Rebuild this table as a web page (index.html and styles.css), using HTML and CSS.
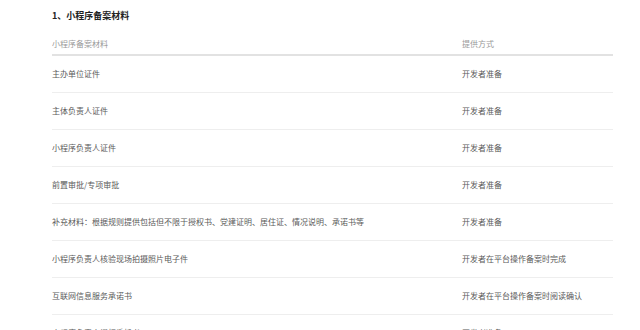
FILE: index.html
```html
<!DOCTYPE html>
<html lang="zh-CN">
<head>
<meta charset="utf-8">
<link rel="stylesheet" href="styles.css">
</head>
<body>
<div class="page">
  <h2 class="title">1、小程序备案材料</h2>
  <div class="table">
    <div class="row head">
      <div class="c1">小程序备案材料</div>
      <div class="c2">提供方式</div>
    </div>
    <div class="row"><div class="c1">主办单位证件</div><div class="c2">开发者准备</div></div>
    <div class="row"><div class="c1">主体负责人证件</div><div class="c2">开发者准备</div></div>
    <div class="row"><div class="c1">小程序负责人证件</div><div class="c2">开发者准备</div></div>
    <div class="row"><div class="c1">前置审批/专项审批</div><div class="c2">开发者准备</div></div>
    <div class="row"><div class="c1">补充材料：根据规则提供包括但不限于授权书、党建证明、居住证、情况说明、承诺书等</div><div class="c2">开发者准备</div></div>
    <div class="row"><div class="c1">小程序负责人核验现场拍摄照片电子件</div><div class="c2">开发者在平台操作备案时完成</div></div>
    <div class="row"><div class="c1">互联网信息服务承诺书</div><div class="c2">开发者在平台操作备案时阅读确认</div></div>
    <div class="row"><div class="c1">小程序负责人授权委托书</div><div class="c2">开发者准备</div></div>
  </div>
</div>
</body>
</html>
```
FILE: styles.css
```css
html, body {
  margin: 0;
  padding: 0;
  background: #fff;
}
body {
  font-family: "Noto Sans CJK SC", "Noto Sans", sans-serif;
  color: #555;
  overflow: hidden;
  height: 330px;
}
.page {
  padding: 9px 27px 0 52px;
}
.title {
  margin: 0;
  font-size: 9px;
  line-height: 14px;
  font-weight: 700;
  color: #222;
}
.table {
  margin-top: 14px;
}
.row {
  display: flex;
  align-items: center;
  height: 36px;
  border-bottom: 1px solid #eeeeee;
  font-size: 8px;
  line-height: 12px;
  color: #5a5a5a;
}
.row.head {
  height: 19px;
  padding-top: 1px;
  box-sizing: border-box;
  align-items: flex-start;
  border-bottom: 2px solid #e2e2e2;
  color: #999;
}
.c1 {
  width: 410px;
  flex: none;
}
.c2 {
  flex: 1;
}
```
